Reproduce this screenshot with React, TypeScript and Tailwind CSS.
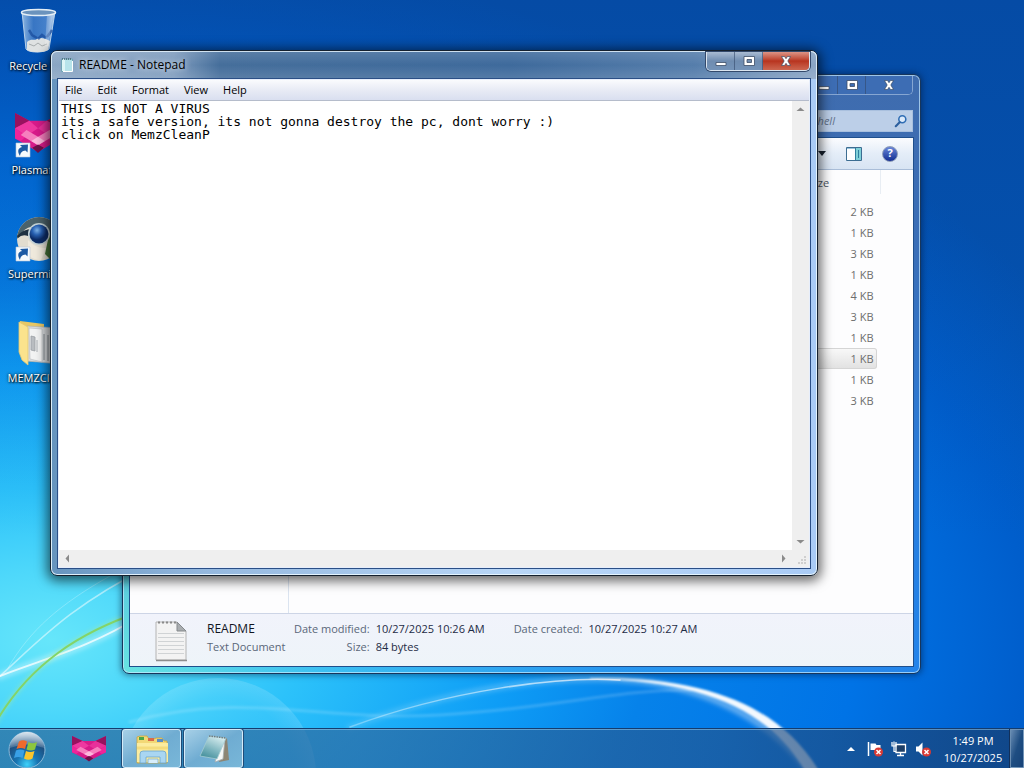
import type { ReactNode } from 'react';
import { clsx } from 'clsx';

const README_TEXT = `THIS IS NOT A VIRUS
its a safe version, its not gonna destroy the pc, dont worry :)
click on MemzCleanP`;

const MENUS = ['File', 'Edit', 'Format', 'View', 'Help'];

const FILE_SIZES = ['2 KB', '1 KB', '3 KB', '1 KB', '4 KB', '3 KB', '1 KB', '1 KB', '1 KB', '3 KB'];
const SELECTED_ROW = 7;

/* ---------- wallpaper ---------- */

const Wallpaper = () => (
  <svg className="absolute inset-0 h-full w-full" viewBox="0 0 1024 768" preserveAspectRatio="none" aria-hidden="true">
    <defs>
      <radialGradient id="sky" gradientUnits="userSpaceOnUse" cx="0" cy="0" r="1" gradientTransform="translate(50 640) scale(1150 690)">
        <stop offset="0" stopColor="#66e6fa" />
        <stop offset="0.1" stopColor="#4ed8fa" />
        <stop offset="0.22" stopColor="#2cc2fa" />
        <stop offset="0.4" stopColor="#0e9df6" />
        <stop offset="0.52" stopColor="#0682ea" />
        <stop offset="0.7" stopColor="#0073e6" />
        <stop offset="0.85" stopColor="#005ecc" />
        <stop offset="1" stopColor="#0452b0" />
      </radialGradient>
      <linearGradient id="skyTop" x1="0" y1="0" x2="0" y2="1">
        <stop offset="0" stopColor="#06449a" stopOpacity="0.5" />
        <stop offset="0.5" stopColor="#0448a0" stopOpacity="0.1" />
        <stop offset="0.7" stopColor="#0448a0" stopOpacity="0" />
      </linearGradient>
      <radialGradient id="bubble">
        <stop offset="0" stopColor="#fff" stopOpacity="0" />
        <stop offset="0.8" stopColor="#fff" stopOpacity="0.05" />
        <stop offset="1" stopColor="#fff" stopOpacity="0.14" />
      </radialGradient>
      <linearGradient id="beam" gradientUnits="userSpaceOnUse" x1="350" y1="0" x2="820" y2="0">
        <stop offset="0" stopColor="#fff" stopOpacity="0.3" />
        <stop offset="0.5" stopColor="#fff" stopOpacity="0.7" />
        <stop offset="0.75" stopColor="#fff" />
        <stop offset="1" stopColor="#fff" />
      </linearGradient>
      <filter id="soft" x="-20%" y="-20%" width="140%" height="140%">
        <feGaussianBlur stdDeviation="2" />
      </filter>
      <filter id="edge" x="-5%" y="-5%" width="110%" height="110%">
        <feGaussianBlur stdDeviation="0.8" />
      </filter>
    </defs>
    <rect width="1024" height="768" fill="url(#sky)" />
    <rect width="1024" height="768" fill="url(#skyTop)" />
    <circle cx="218" cy="776" r="98" fill="url(#bubble)" />
    <g fill="none" strokeLinecap="round">
      <path d="M0 676C40 660 90 648 140 616" stroke="#fff" strokeOpacity="0.3" strokeWidth="8" filter="url(#soft)" />
      <path d="M0 676C40 660 90 648 140 616" stroke="#fff" strokeOpacity="0.75" strokeWidth="2" />
      <path d="M0 676C40 640 70 606 150 566" stroke="#fff" strokeOpacity="0.5" strokeWidth="1.5" />
      <path d="M8 668C30 630 60 604 110 576" stroke="#fff" strokeOpacity="0.25" strokeWidth="1" />
      <path d="M-4 722C30 664 80 632 140 612" stroke="#b8f08c" strokeOpacity="0.4" strokeWidth="4" filter="url(#soft)" />
      <path d="M-4 722C30 664 80 632 140 612" stroke="#84d468" strokeWidth="2" />
      <path d="M130 722C240 690 320 722 440 715S610 690 690 690" stroke="#fff" strokeOpacity="0.16" strokeWidth="3" filter="url(#edge)" />
      <path d="M350 727C450 690 560 672 640 681C700 688 770 715 812 776" stroke="url(#beam)" strokeOpacity="0.35" strokeWidth="7" filter="url(#soft)" />
      <path d="M350 727C450 690 560 676 620 680" stroke="url(#beam)" strokeWidth="1.500" />
    </g>
    <path d="M590 679C710 680 775 715 808 776L822 776C786 712 718 676 590 678Z" fill="#fff" fillOpacity="0.95" filter="url(#edge)" />
  </svg>
);

/* ---------- desktop icons ---------- */

const ShortcutArrow = () => (
  <g>
    <path d="M2 31h14v14H2z" fill="#f6fafd" stroke="#b8c8d8" strokeWidth="0.6" />
    <path d="M6 44C3 39 4 36 8 35L6 33L14 32.500L13.500 40.500L11.500 38.500C8 39 6.500 40.500 6 44z" fill="#1c5aa4" />
  </g>
);

const RecycleBinIcon = () => (
  <svg viewBox="0 0 48 48" className="size-12" aria-hidden="true">
    <defs>
      <linearGradient id="glassBin" x1="0" x2="1">
        <stop offset="0" stopColor="#9fc4e8" stopOpacity="0.9" />
        <stop offset="0.35" stopColor="#4f86cc" stopOpacity="0.7" />
        <stop offset="0.75" stopColor="#5d92d4" stopOpacity="0.75" />
        <stop offset="1" stopColor="#cfe2f5" stopOpacity="0.95" />
      </linearGradient>
    </defs>
    <path d="M8 4l4 37c2 4 19 4 23 0l6-37z" fill="url(#glassBin)" stroke="#b6d0ea" strokeWidth="1" />
    <path d="M13 34c4-4 7-1 10-3s8-1 13 2l-2 9c-5 3-16 3-21 0z" fill="#dfe2e2" />
    <path d="M15 36l5 2 4-3 4 3 5-2" fill="none" stroke="#a8adae" />
    <path d="M15 22l3 5 5 3M33 29l5-7M24 31l4-4 4 3" fill="none" stroke="#17489a" strokeWidth="2.500" strokeOpacity="0.7" />
    <path d="M33 6h6l-5 32h-3z" fill="#fff" fillOpacity="0.25" />
    <ellipse cx="24.500" cy="4.500" rx="17" ry="3" fill="#6b93bd" stroke="#e4eef6" strokeWidth="1.500" />
  </svg>
);

const FoxShape = () => (
  <g>
    <path d="M0 0L15 9H33L48 0V30L24 46L0 30Z" fill="#d81b8a" />
    <path d="M0 0L15 9L0 18Z" fill="#98125f" />
    <path d="M48 0L33 9L48 18Z" fill="#98125f" />
    <path d="M15 9L24 18L12 27L0 18Z" fill="#ee38a0" />
    <path d="M33 9L48 18L36 27L24 18Z" fill="#e8309a" />
    <path d="M0 18L12 27L6 33L0 30Z" fill="#f0249a" />
    <path d="M48 18L36 27L42 33L48 30Z" fill="#f0249a" />
    <path d="M12 20L24 28L36 20L42 26L24 38L6 26Z" fill="#f67fbe" />
    <path d="M24 28L31 33L24 38L17 33Z" fill="#fdb9dc" />
    <path d="M18 41L24 37L30 41L24 47Z" fill="#6e1048" />
  </g>
);

const PlasmaIcon = () => (
  <svg viewBox="0 0 48 48" className="size-12" aria-hidden="true">
    <g transform="translate(1 1) scale(.96 .85)">
      <FoxShape />
    </g>
    <ShortcutArrow />
  </svg>
);

const SupermiumIcon = () => (
  <svg viewBox="0 0 48 48" className="size-12" aria-hidden="true">
    <defs>
      <radialGradient id="lens" cx="0.4" cy="0.3">
        <stop offset="0" stopColor="#7db4ea" />
        <stop offset="0.5" stopColor="#2861b2" />
        <stop offset="1" stopColor="#0c2c66" />
      </radialGradient>
    </defs>
    <circle cx="25" cy="23" r="22" fill="#e2ddd0" />
    <path d="M3 23A22 22 0 0 1 47 23L24 10Q12 10 8 17Z" fill="#4b626a" />
    <path d="M3 20Q10 12 20 13L14 20Q8 18 4 22Z" fill="#1f3140" />
    <path d="M36 14l11 6c1 10-3 18-11 23l-5-5z" fill="#46743a" />
    <path d="M14 24q8 9 18 8l-5 12q-8 0-13-5z" fill="#efe9dc" />
    <circle cx="25" cy="18" r="11" fill="#c3d2d6" />
    <circle cx="25" cy="18" r="9.500" fill="url(#lens)" />
    <ShortcutArrow />
  </svg>
);

const FolderIcon = () => (
  <svg viewBox="0 0 48 48" className="size-12" aria-hidden="true">
    <path d="M6 1l24 3v38l-20-1-4-7z" fill="#e8c764" />
    <path d="M13 6l32 2v36l-32-3z" fill="#d9dcde" stroke="#a9adb0" strokeWidth="0.6" />
    <path d="M15 8l13 1v33l-12-3z" fill="#f2f3f3" stroke="#b5b9bc" strokeWidth="0.6" />
    <path d="M17 16l4 1v14l-4-1zM23 20v12" fill="#b9bdc1" stroke="#9aa0a5" strokeWidth="0.8" />
    <path d="M5 2l9 5v38l-6-5-3-8z" fill="#fbe38d" stroke="#e3c873" strokeWidth="0.8" />
    <path d="M30 14v26M34 15v26" stroke="#a0a5aa" strokeWidth="1.500" />
  </svg>
);

const DESKTOP_ICONS = [
  { label: 'Recycle Bin', icon: <RecycleBinIcon /> },
  { label: 'Plasmafox', icon: <PlasmaIcon /> },
  { label: 'Supermium', icon: <SupermiumIcon /> },
  { label: 'MEMZClean', icon: <FolderIcon /> },
];

const DesktopIcons = () => (
  <div className="relative flex w-[76px] flex-col gap-9 pt-2">
    {DESKTOP_ICONS.map(({ label, icon }) => (
      <button key={label} type="button" className="flex flex-col items-center whitespace-nowrap leading-5 text-white [text-shadow:1px_1px_2px_#000,0_0_3px_#000]">
        {icon}
        {label}
      </button>
    ))}
  </div>
);

/* ---------- window chrome ---------- */

const MinimizeGlyph = () => (
  <svg viewBox="0 0 14 12" className="h-3 w-3.5" aria-hidden="true">
    <path d="M2 7.500h10v3H2z" fill="#fff" stroke="#3c4d66" strokeWidth="0.8" />
  </svg>
);

const MaximizeGlyph = () => (
  <svg viewBox="0 0 14 12" className="h-3 w-3.5" aria-hidden="true">
    <path fillRule="evenodd" d="M2 1.500h10.500v9H2zM5 4.500v3h4.500v-3z" fill="#fff" stroke="#3c4d66" strokeWidth="0.8" />
  </svg>
);

const CloseGlyph = () => (
  <svg viewBox="0 0 14 12" className="h-3 w-3.5" aria-hidden="true">
    <path d="M2.500 1.500h3L7 3.700l1.500-2.200h3L8.800 6l2.700 4.500h-3L7 8.300l-1.500 2.200h-3L5.200 6z" fill="#fff" stroke="#3c4d66" strokeWidth="0.7" />
  </svg>
);

const WindowButtons = ({ active }: { active?: boolean }) => {
  const plain = active
    ? 'bg-linear-to-b from-[#a9bbd2] via-[#6f8cb0] to-[#7493b8]'
    : 'bg-[#3d6db4]';
  return (
    <div
      className={clsx(
        'flex h-[19px] overflow-hidden rounded-b-[5px] border border-t-0',
        active ? 'border-[#dbe5f0] shadow-[0_0_0_1px_#33496b]' : 'border-[#86a6d2]',
      )}
    >
      <button type="button" aria-label="Minimize" className={clsx('flex w-7 items-center justify-center border-r border-[#33496b]/60', plain)}>
        <MinimizeGlyph />
      </button>
      <button type="button" aria-label="Maximize" className={clsx('flex w-7 items-center justify-center border-r border-[#33496b]/60', plain)}>
        <MaximizeGlyph />
      </button>
      <button
        type="button"
        aria-label="Close"
        className={clsx(
          'flex w-[46px] items-center justify-center',
          active ? 'bg-linear-to-b from-[#dc9486] via-[#b8341f] via-50% to-[#cc6650]' : plain,
        )}
      >
        <CloseGlyph />
      </button>
    </div>
  );
};

/* ---------- explorer ---------- */

const DocumentIcon = () => (
  <svg viewBox="0 0 34 42" className="h-[42px] w-[34px]" aria-hidden="true">
    <path d="M2 2h21l9 9v29H2z" fill="#f3f3f3" stroke="#b4b4b4" />
    <path d="M23 2v9h9z" fill="#a9adb0" stroke="#85898c" />
    <path d="M4 2.500h18" stroke="#8a8a8a" strokeWidth="2" strokeDasharray="2 2" />
    <path d="M4 13.500h26M4 17.500h26M4 21.500h26M4 25.500h26M4 29.500h26M4 33.500h26" stroke="#d0d3d5" />
    <path d="M2 40.500h31" stroke="#8d8d8d" strokeWidth="1.500" />
  </svg>
);

const PreviewPaneIcon = () => (
  <svg viewBox="0 0 16 14" className="h-3.5 w-4" aria-hidden="true">
    <path d="M.5.500h15v13H.5z" fill="#fdfeff" stroke="#3c6d92" />
    <path d="M10 1h5v12h-5z" fill="#7fd0d8" />
    <path d="M9.500 1v12M12.500 3v8" stroke="#2f7f9e" />
    <path d="M1 1.500h8" stroke="#9ac4dc" />
  </svg>
);

const HelpIcon = () => (
  <span className="flex size-4 items-center justify-center rounded-full border border-[#8b9bb8] bg-linear-to-b from-[#6a86d8] to-[#142c92] font-bold text-white">
    ?
  </span>
);

const DetailPair = ({ label, children }: { label: string; children: ReactNode }) => (
  <>
    <dt className="text-right text-[#5a6779]">{label}</dt>
    <dd className="text-[#1e2b45]">{children}</dd>
  </>
);

const ExplorerWindow = () => (
  <section
    aria-label="Explorer"
    className="absolute top-[74px] right-[103px] bottom-[54px] left-[122px] flex flex-col rounded-[7px] border border-[#17365c] bg-[linear-gradient(to_bottom,#3f6cae_0%,#3b6fb8_30%,#2f74cc66_70%,#2f74cc00_100%),linear-gradient(to_right,#68e4e2,#3cc0f2_25%,#2898f0_60%,#2484ea)] px-[7px] pb-[7px] shadow-[0_0_6px_1px_rgba(0,20,50,0.5),inset_0_0_0_1px_rgba(200,235,255,0.7)]"
  >
    <header className="flex h-[63px] flex-col items-end justify-between pt-px pb-1.5">
      <WindowButtons />
      <div className="flex h-[22px] w-[200px] items-center border border-[#a9c0de] bg-[#bccfe8] pr-1">
        <input
          aria-label="Search"
          defaultValue="Shell"
          className="min-w-0 flex-1 bg-transparent pl-[98px] text-[11px] text-[#65748c] italic outline-none"
        />
        <svg viewBox="0 0 16 16" className="size-3.5" aria-hidden="true">
          <circle cx="9.500" cy="6" r="4" fill="#dceafa" stroke="#2f6db4" strokeWidth="1.800" />
          <path d="M6.500 9.500L2 14" stroke="#2c5f9e" strokeWidth="2.400" strokeLinecap="round" />
        </svg>
      </div>
    </header>

    <div className="flex min-h-0 flex-1 flex-col bg-[#fdfdfe] shadow-[0_0_0_1px_#1f4f8c]">
      <div className="flex h-8 shrink-0 items-center justify-end gap-4 border-b border-[#a9bdd8] bg-linear-to-b from-[#fbfcfe] via-[#e4edf8] to-[#d8e4f3] pr-[15px]">
        <button type="button" aria-label="Change your view" className="mr-1 flex">
          <svg viewBox="0 0 8 5" className="h-[5px] w-2" aria-hidden="true">
            <path d="M0 0h8L4 5z" fill="#16202e" />
          </svg>
        </button>
        <button type="button" aria-label="Show the preview pane" className="mr-1">
          <PreviewPaneIcon />
        </button>
        <button type="button" aria-label="Get help">
          <HelpIcon />
        </button>
      </div>

      <div className="flex min-h-0 flex-1">
        <nav aria-label="Folders" className="w-[159px] border-r border-[#dbe4f0]" />
        <div className="flex flex-1 justify-end overflow-hidden pr-8">
          <table className="h-fit w-20 border-collapse">
            <thead>
              <tr className="h-6 text-[#4c5563]">
                <th scope="col" className="border-r border-[#e8edf3] pt-0.5 pb-0 pl-2 text-left font-normal">Size</th>
              </tr>
            </thead>
            <tbody className="text-right text-[#6d6d6d]">
              <tr className="h-[7px]" />
              {FILE_SIZES.map((size, i) => (
                <tr key={i} className="h-[21px]">
                  <td className="p-0">
                    <div
                      className={clsx(
                        'mr-1 h-[21px] rounded-r-[3px] border border-l-0 pr-0.5 leading-[19px]',
                        i === SELECTED_ROW ? 'border-[#d5d5d5] bg-linear-to-b from-[#f8f8f8] to-[#e2e2e2]' : 'border-transparent',
                      )}
                    >
                      {size}
                    </div>
                  </td>
                </tr>
              ))}
            </tbody>
          </table>
        </div>
      </div>

      <footer className="flex h-[53px] shrink-0 border-t border-[#cdd5e6] bg-linear-to-b from-[#f1f3fb] to-[#eef4f9] pt-1.5 pl-6 leading-[18px]">
        <DocumentIcon />
        <div className="ml-[19px] w-[87px]">
          <p className="text-xs leading-[18px] text-[#10151f]">README</p>
          <p className="text-[#5a6779]">Text Document</p>
        </div>
        <dl className="grid h-fit grid-cols-[auto_auto] gap-x-1.5">
          <DetailPair label="Date modified:">10/27/2025 10:26 AM</DetailPair>
          <DetailPair label="Size:">84 bytes</DetailPair>
        </dl>
        <dl className="ml-[29px] grid h-fit grid-cols-[auto_auto] gap-x-1.5">
          <DetailPair label="Date created:">10/27/2025 10:27 AM</DetailPair>
        </dl>
      </footer>
    </div>
  </section>
);

/* ---------- notepad ---------- */

const NotepadSmallIcon = () => (
  <svg viewBox="0 0 14 16" className="h-4 w-3.5" aria-hidden="true">
    <path d="M1.500 2h11v12.500h-11z" fill="#b6e3ea" stroke="#6fa3b4" />
    <path d="M2 2h3v12H2z" fill="#ddf5f6" />
    <path d="M2 2h10" stroke="#476473" strokeWidth="1.500" strokeDasharray="1 1" />
    <path d="M12.500 4v10.500H3" stroke="#fff" fill="none" />
  </svg>
);

const ScrollArrow = ({ d, label }: { d: string; label: string }) => (
  <button type="button" aria-label={label} className="flex size-[17px] items-center justify-center">
    <svg viewBox="0 0 9 9" className="size-[9px]" aria-hidden="true">
      <path d={d} fill="#8a8a8a" />
    </svg>
  </button>
);

const NotepadWindow = () => (
  <section
    aria-label="README - Notepad"
    className="absolute top-[50px] right-[206px] bottom-[152px] left-[50px] flex flex-col rounded-[7px] border border-[#14202e] bg-[linear-gradient(to_right,#6694be,#94b8de_20%,#b8d6f6_60%,#a9cbf5)] px-[7px] pb-[7px] shadow-[0_2px_12px_3px_rgba(0,0,0,0.6),inset_0_0_0_1px_rgba(235,248,255,0.9)]"
  >
    <header className="-mx-[7px] flex h-7 shrink-0 items-start justify-between rounded-t-md bg-[linear-gradient(to_bottom,rgba(255,255,255,0.12),rgba(255,255,255,0)_50%,rgba(255,255,255,0.12)),linear-gradient(to_right,#8aa6c4_0%,#7f9cbe_16%,#456e9b_22%,#3e6a9c_60%,#557dab_84%,#8ba6c6_100%)] pt-px pr-[7px] pl-[9px] shadow-[inset_0_1px_0_rgba(235,248,255,0.8),inset_1px_0_0_rgba(235,248,255,0.8),inset_-1px_0_0_rgba(235,248,255,0.8)]">
      <div className="flex h-[26px] items-center gap-[5px]">
        <NotepadSmallIcon />
        <h1 className="text-xs text-black [text-shadow:0_0_6px_#fff]">README - Notepad</h1>
      </div>
      <WindowButtons active />
    </header>

    <div className="flex min-h-0 flex-1 flex-col border border-[#e6eefc] bg-white shadow-[0_0_0_1px_#2b4f86]">
      <nav aria-label="Menu bar" className="flex h-[21px] shrink-0 items-center gap-[15px] border-b border-[#b5bccb] bg-linear-to-b from-[#fafbfd] via-[#e8ebf5] to-[#d9dff0] px-1.5">
        {MENUS.map((menu) => (
          <button key={menu} type="button" className="text-black">
            {menu}
          </button>
        ))}
      </nav>

      <div className="flex min-h-0 flex-1">
        <textarea
          aria-label="Document text"
          spellCheck={false}
          wrap="off"
          defaultValue={README_TEXT}
          className="min-w-0 flex-1 resize-none overflow-hidden bg-white pt-px pl-0.5 font-['DejaVu_Sans_Mono',monospace] text-[13px] leading-[13px] text-black outline-none"
        />
        <div className="flex w-[17px] flex-col justify-between bg-[#efefef]">
          <ScrollArrow label="Scroll up" d="M0.500 6L4.500 2.500L8.500 6z" />
          <ScrollArrow label="Scroll down" d="M0.500 3L4.500 6.500L8.500 3z" />
        </div>
      </div>
      <div className="flex h-[17px] shrink-0 items-center bg-[#efefef]">
        <div className="flex flex-1 justify-between">
          <ScrollArrow label="Scroll left" d="M6 0.500L2.500 4.500L6 8.500z" />
          <ScrollArrow label="Scroll right" d="M3 0.500L6.500 4.500L3 8.500z" />
        </div>
        <svg viewBox="0 0 17 17" className="size-[17px]" aria-hidden="true">
          <path d="M12 6h2v2h-2zM12 9h2v2h-2zM12 12h2v2h-2zM9 9h2v2H9zM9 12h2v2H9zM6 12h2v2H6z" fill="#cfcfcf" />
        </svg>
      </div>
    </div>
  </section>
);

/* ---------- taskbar ---------- */

const StartOrb = () => (
  <svg viewBox="0 0 40 40" className="size-10" aria-hidden="true">
    <defs>
      <radialGradient id="orb" cx="0.5" cy="0.9" r="0.85">
        <stop offset="0" stopColor="#3fd2fa" />
        <stop offset="0.35" stopColor="#1876b4" />
        <stop offset="0.75" stopColor="#1d4f80" />
        <stop offset="1" stopColor="#5f8db4" />
      </radialGradient>
      <linearGradient id="orbShine" x1="0" y1="0" x2="0" y2="1">
        <stop offset="0" stopColor="#fff" stopOpacity="0.75" />
        <stop offset="1" stopColor="#fff" stopOpacity="0.15" />
      </linearGradient>
    </defs>
    <circle cx="20" cy="21" r="18" fill="url(#orb)" stroke="#8ab8d8" strokeWidth="1" />
    <path d="M3 19a17 16 0 0 1 34 0q-17-7-34 0z" fill="url(#orbShine)" />
    <path d="M12 12.500q4-2.500 8 0l-2 7.500q-4-2-8.500 0z" fill="#ee6a2c" />
    <path d="M21.500 13q4 2.500 8.500 0l-2 7.500q-4 2-8.500 0z" fill="#8cc63e" />
    <path d="M9 21.500q4-2 8.500 0l-2 7.500q-4-2-8.500 0z" fill="#39a0e6" />
    <path d="M19 22q4 2 8.500 0l-2 7.500q-4 2.500-8.500 0z" fill="#fbc52c" />
  </svg>
);

const ExplorerTaskIcon = () => (
  <svg viewBox="0 0 34 30" className="h-[30px] w-[34px]" aria-hidden="true">
    <path d="M2 3l3-1h7l2 3h5l2-1h6l2 3h3v22H2z" fill="#f3d876" stroke="#c9a640" strokeWidth="0.8" />
    <path d="M4 3h5v3H4z" fill="#4ca64a" />
    <path d="M13 4h6v3h-6z" fill="#d96a48" />
    <path d="M22 5h6v3h-6z" fill="#5c8cc4" />
    <path d="M2 9h31v19H2z" fill="#fcec9f" />
    <path d="M2 14h31" stroke="#f5dc7c" strokeWidth="3" />
    <path d="M5 29V20q0-3 3-3h20q3 0 3 3v9h-6v-6H11v6z" fill="#a9d6f2" stroke="#6aa4cc" strokeWidth="0.8" />
    <path d="M13 29v-4h10v4" fill="#d8eefa" stroke="#7ab0d2" strokeWidth="0.8" />
  </svg>
);

const NotepadTaskIcon = () => (
  <svg viewBox="0 0 34 30" className="h-[30px] w-[34px]" aria-hidden="true">
    <defs>
      <linearGradient id="pad" x1="0.700" y1="0" x2="0.200" y2="1">
        <stop offset="0" stopColor="#d9eef0" />
        <stop offset="0.6" stopColor="#78b2bc" />
        <stop offset="1" stopColor="#3f8c98" />
      </linearGradient>
    </defs>
    <path d="M30 4l2 22-10 2 5-22z" fill="#8c8574" />
    <path d="M28 4l-2 21-8 3 5-22z" fill="#f5f7f6" stroke="#a5acae" strokeWidth="0.8" />
    <path d="M12 2l17 2-9 21-17-3z" fill="url(#pad)" stroke="#a4ccd2" strokeWidth="0.8" />
    <path d="M12 2l17 2" stroke="#6f7c80" strokeWidth="1.500" strokeDasharray="1.500 1" />
  </svg>
);

const RedCross = () => (
  <g>
    <circle cx="11.500" cy="11" r="4.500" fill="#d93a34" />
    <path d="M9.500 9l4 4m0-4l-4 4" stroke="#fff" strokeWidth="1.500" />
  </g>
);

const FlagIcon = () => (
  <svg viewBox="0 0 16 16" className="size-4" aria-hidden="true">
    <path d="M1.500 1v14" stroke="#fff" strokeWidth="1.500" />
    <path d="M3.500 2.500h5l1 1.500h4v5h-10z" fill="#fff" />
    <RedCross />
  </svg>
);

const NetworkIcon = () => (
  <svg viewBox="0 0 16 16" className="size-4" aria-hidden="true">
    <path d="M5 3.500h9.500v8H5z" fill="#1d3f68" stroke="#fff" strokeWidth="1.300" />
    <path d="M9.500 12v2M6 14.500h7" stroke="#fff" strokeWidth="1.300" />
    <path d="M1 1v4h4V1M3 0.500v10h2" stroke="#fff" strokeWidth="1.200" fill="none" />
  </svg>
);

const VolumeIcon = () => (
  <svg viewBox="0 0 16 16" className="size-4" aria-hidden="true">
    <path d="M1 5.500h2.500L7.500 1.500v13L3.500 10.500H1z" fill="#fff" />
    <RedCross />
  </svg>
);

const TaskButton = ({ label, children }: { label: string; children: ReactNode }) => (
  <button
    type="button"
    aria-label={label}
    className="flex h-[39px] w-[59px] items-center justify-center rounded-[3px] border border-[#d5ebf8] bg-linear-to-br from-[#b4d8ec]/90 via-[#7fb6d8]/80 to-[#8cc4e0]/80 shadow-[0_0_0_1px_#1f4c78]"
  >
    {children}
  </button>
);

const Taskbar = () => (
  <footer className="relative flex h-10 shrink-0 items-center border-t border-[#143c6e] bg-[linear-gradient(to_right,rgba(44,110,160,0.75),rgba(44,104,160,0.7)_35%,rgba(34,84,140,0.66)_70%,rgba(22,62,112,0.72))] text-white shadow-[inset_0_1px_0_rgba(160,210,240,0.5)]">
    <button type="button" aria-label="Start" className="ml-[7px]">
      <StartOrb />
    </button>
    <button type="button" aria-label="Plasmafox" className="mr-4 ml-[25px]">
      <svg viewBox="0 0 48 48" preserveAspectRatio="none" className="h-[26px] w-[34px]" aria-hidden="true">
        <FoxShape />
      </svg>
    </button>
    <div className="flex gap-[3px]">
      <TaskButton label="Explorer">
        <ExplorerTaskIcon />
      </TaskButton>
      <TaskButton label="README - Notepad">
        <NotepadTaskIcon />
      </TaskButton>
    </div>

    <div className="ml-auto flex h-full items-center">
      <div className="flex items-center gap-2">
        <button type="button" aria-label="Show hidden icons" className="mr-1 flex">
          <svg viewBox="0 0 8 4" className="h-1 w-2" aria-hidden="true">
            <path d="M0 4L4 0L8 4z" fill="#fff" />
          </svg>
        </button>
        <button type="button" aria-label="Action center">
          <FlagIcon />
        </button>
        <button type="button" aria-label="Network">
          <NetworkIcon />
        </button>
        <button type="button" aria-label="Volume">
          <VolumeIcon />
        </button>
      </div>
      <button type="button" className="mr-[5px] ml-2.5 w-16 text-center leading-[17px]">
        <span className="block">1:49 PM</span>
        <span className="block">10/27/2025</span>
      </button>
      <button
        type="button"
        aria-label="Show desktop"
        className="h-full w-3.5 border border-[#8aa9c8]/70 bg-linear-to-br from-[#7d9cbc]/80 via-[#24507e]/70 to-[#1a4170]/70 shadow-[-1px_0_0_#12305a]"
      />
    </div>
  </footer>
);

export default function App() {
  return (
    <div className="relative flex h-screen flex-col overflow-hidden font-['Open_Sans','Noto_Sans',sans-serif] text-[11px] select-none">
      <Wallpaper />
      <main className="relative min-h-0 flex-1">
        <DesktopIcons />
        <ExplorerWindow />
        <NotepadWindow />
      </main>
      <Taskbar />
    </div>
  );
}
